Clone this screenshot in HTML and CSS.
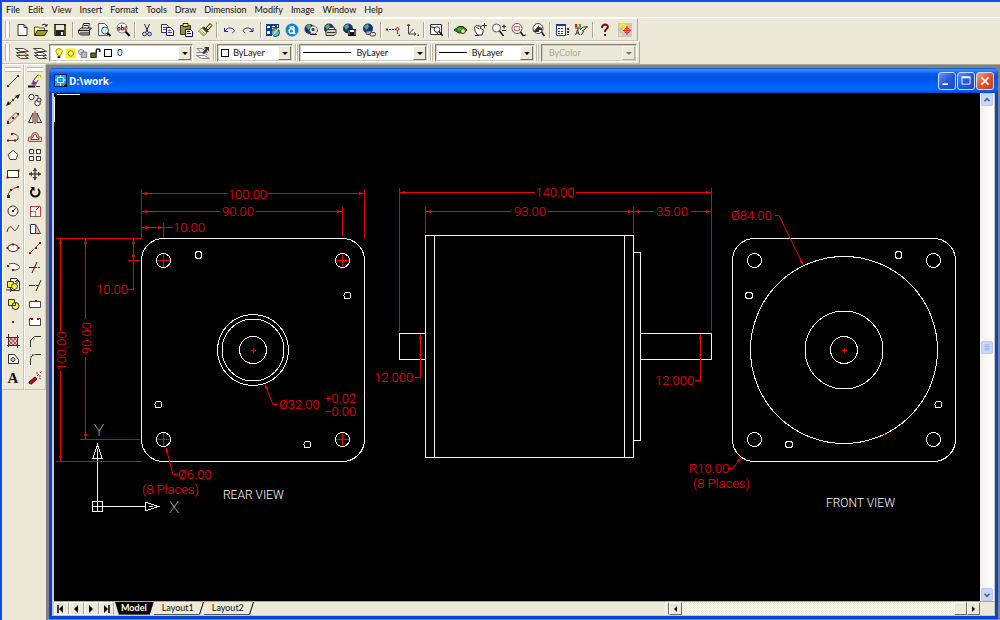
FILE: index.html
```html
<!DOCTYPE html>
<html lang="en">
<head>
<meta charset="utf-8">
<title>D:\work</title>
<link rel="stylesheet" href="styles.css">
</head>
<body>
<div class="app">
<nav class="menubar" aria-label="Main menu">
<button>File</button><button>Edit</button><button>View</button><button>Insert</button><button>Format</button><button>Tools</button><button>Draw</button><button>Dimension</button><button>Modify</button><button>Image</button><button>Window</button><button>Help</button>
</nav>

<div class="toolbar standard" role="toolbar" aria-label="Standard">
<span class="grip"></span>
<div class="tools">
<button aria-label="New"><svg viewBox="0 0 16 16"><path d="M4 2.500h6l3 3v8H4z" fill="#fff" stroke="#333"/><path d="M10 2.500v3h3" fill="none" stroke="#333"/></svg></button>
<button aria-label="Open"><svg viewBox="0 0 16 16"><path d="M1.500 13V5h4l1 1h5v3" fill="#ffff9c" stroke="#55520c"/><path d="M1.500 13.500l3-5h10l-3 5z" fill="#a09c1c" stroke="#222"/><path d="M9 3q3-2 5 1m0-2v2h-2" fill="none" stroke="#111"/></svg></button>
<button aria-label="Save"><svg viewBox="0 0 16 16"><path d="M2 2h12v12H3l-1-1z" fill="#222"/><path d="M4 3h8v5H4z" fill="#ece9d8"/><path d="M3 3v10M13 4v9" stroke="#808000"/><path d="M9 10h2v3H9z" fill="#fff"/></svg></button>
<i class="sep"></i>
<button aria-label="Print"><svg viewBox="0 0 16 16"><path d="M5.500 6l1-4.500h6l-1 4.500" fill="#fff" stroke="#222"/><path d="M7 3.500h4" stroke="#111"/><path d="M1.500 8l3-2h10l-2 2v5h-9l-2-2z" fill="#ccc" stroke="#222"/><path d="M2 8.500h10l2-2M3 11h9" fill="none" stroke="#222"/></svg></button>
<button aria-label="Print Preview"><svg viewBox="0 0 16 16"><path d="M2.500 1.500h6l3 3v9h-9z" fill="#fff" stroke="#555"/><circle cx="9" cy="8.500" r="3.500" fill="#bff2f5" stroke="#555"/><path d="M11.500 11l3 3" stroke="#111" stroke-width="2"/></svg></button>
<button aria-label="Find and Replace"><svg viewBox="0 0 16 16"><circle cx="7" cy="6" r="5" fill="#fff" stroke="#777"/><path d="M10.500 9.500l4 4.500" stroke="#111" stroke-width="2"/><path d="M3 5.500h2V8H3zM6.500 3v5h2V5.500h-2M12 5h-2v3h2" fill="none" stroke="#a00020"/></svg></button>
<i class="sep"></i>
<button aria-label="Cut"><svg viewBox="0 0 16 16"><path d="M5.500 2l3.500 8M10.500 2L7 10" stroke="#222"/><circle cx="5.500" cy="12" r="1.800" fill="none" stroke="#0a1d8c"/><circle cx="10.500" cy="12" r="1.800" fill="none" stroke="#0a1d8c"/></svg></button>
<button aria-label="Copy"><svg viewBox="0 0 16 16"><path d="M2.500 2.500h5l2 2v6h-7z" fill="#fff" stroke="#333"/><path d="M4 5.500h4M4 7.500h3" stroke="#555"/><path d="M7.500 5.500h4l3 3v5h-7z" fill="#fff" stroke="#00008b"/><path d="M9 8.500h3M9 10.500h4" stroke="#4040a0"/></svg></button>
<button aria-label="Paste"><svg viewBox="0 0 16 16"><path d="M2.500 3.500h10v9h-10z" fill="#9a8f38" stroke="#333"/><path d="M5 1.500h5v3H5z" fill="#ffef70" stroke="#222"/><path d="M7.500 7.500h5l2 2v5h-7z" fill="#fff" stroke="#00008b"/><path d="M9 9.500h3M9 11.500h4" stroke="#00008b"/></svg></button>
<button aria-label="Match Properties"><svg viewBox="0 0 16 16"><path d="M9 6l4-4.500 2 2L11 8z" fill="#ffdf60" stroke="#111"/><path d="M7 4.500l5 5-2 1-5-5z" fill="#333"/><path d="M5 6l5 5-3.500 3L1.500 9z" fill="#fff8a0" stroke="#777"/><path d="M4 8l4 4M3 9l4 4" stroke="#aaa"/></svg></button>
<i class="sep"></i>
<button aria-label="Undo"><svg viewBox="0 0 16 16"><path d="M3.500 6v3.500H7M4 9c2-3 5-4 8-2s0 3.500-1 4" fill="none" stroke="#1a2a9c"/></svg></button>
<button aria-label="Redo"><svg viewBox="0 0 16 16"><path d="M13 6v3.500H9.500M12.500 9c-2-3-5-4-8-2s0 3.500 1 4" fill="none" stroke="#1a2a9c"/></svg></button>
<i class="sep"></i>
<button aria-label="Today"><svg viewBox="0 0 16 16"><path d="M1 2h13v4H7v8H1z" fill="#063a9c"/><path d="M2 4h3v2H2zM7 4h3v1H7zM12 3h1v2h-1zM2 9h3v3H2z" fill="#fff"/><circle cx="10.500" cy="10.500" r="4" fill="#59b9e4" stroke="#145"/><path d="M8 9l3 3 2-5z" fill="#79c84a"/><path d="M7 14l6-7" stroke="#ff9"/></svg></button>
<button aria-label="Autodesk Point A"><svg viewBox="0 0 16 16"><circle cx="8" cy="8" r="6.500" fill="#0b82df"/><circle cx="7.500" cy="9" r="2.300" fill="none" stroke="#fff" stroke-width="1.600"/><path d="M5.500 5.500q4.500-1.800 4.500 1V11.500h1.500" fill="none" stroke="#fff" stroke-width="1.500"/></svg></button>
<button aria-label="Meet Now"><svg viewBox="0 0 16 16"><circle cx="6.500" cy="7" r="5" fill="#112c96"/><path d="M3 4l4-2 1 3-3 3z" fill="#57b745"/><circle cx="10.500" cy="8" r="4" fill="#ddd" stroke="#444" stroke-dasharray="2 1"/><path d="M7 12.500h7" stroke="#111"/><circle cx="10" cy="7.500" r="1.500" fill="#333"/></svg></button>
<button aria-label="Publish to Web"><svg viewBox="0 0 16 16"><circle cx="7" cy="6.500" r="5" fill="#112c96"/><path d="M3 4l4-2 1 3-3 3z" fill="#57b745"/><path d="M6 7.500l1.500-2h5L12 7.500" fill="#fff" stroke="#444"/><path d="M4 8.500l2-1h8v4l-2 2H4z" fill="#ccc" stroke="#333"/><path d="M5 10.500h8" stroke="#333"/></svg></button>
<button aria-label="eTransmit"><svg viewBox="0 0 16 16"><circle cx="7" cy="6.500" r="5" fill="#112c96"/><path d="M3 4l4-2 1 3-3 3z" fill="#57b745"/><path d="M7 7h8v7H7z" fill="#111"/><path d="M9 8h4v2H9z" fill="#fff"/><path d="M8 8v5M14 8v5" stroke="#a7a033"/></svg></button>
<button aria-label="Insert Hyperlink"><svg viewBox="0 0 16 16"><circle cx="7" cy="6.500" r="5" fill="#112c96"/><path d="M3 4l4-2 1 3-3 3z" fill="#57b745"/><rect x="5" y="9" width="6" height="3.500" rx="1.500" fill="#aaa" stroke="#444"/><rect x="9" y="10.500" width="5.500" height="3.500" rx="1.500" fill="#ddd" stroke="#444"/></svg></button>
<i class="sep"></i>
<button aria-label="Temporary Track Point"><svg viewBox="0 0 16 16"><path d="M1 7.500h10" stroke="#111" stroke-dasharray="2 1"/><path d="M3 5.500l-2 2 2 2" fill="none" stroke="#555"/><circle cx="12.500" cy="7" r="1.500" fill="none" stroke="#b22"/><path d="M12.500 9v3" stroke="#b22"/><path d="M15 12v2h-2z"/></svg></button>
<button aria-label="UCS"><svg viewBox="0 0 16 16"><path d="M4.500 2v10H12M4.500 12l5-5M3 4l1.500-2L6 4M10 10.500l2 1.500-2 1.500" fill="none" stroke="#444"/><path d="M15 12v2h-2z"/></svg></button>
<i class="sep"></i>
<button aria-label="Named Views"><svg viewBox="0 0 16 16"><path d="M2.500 2.500h11v10h-11zM2.500 5h3M4.500 5.500h5v7h-5" fill="#fff" stroke="#333"/><circle cx="9" cy="7.500" r="2.800" fill="#fff" stroke="#333"/><path d="M11 9.500l3 3.500" stroke="#111" stroke-width="1.500"/><path d="M15 12v2h-2z"/></svg></button>
<i class="sep"></i>
<button aria-label="Aerial View"><svg viewBox="0 0 16 16"><path d="M1 8l5-3.500h4L14 8l-4 3H6z" fill="#18952e" stroke="#043e12"/><circle cx="10" cy="9" r="2.500" fill="#ffe044" stroke="#444"/><path d="M5 7h3" stroke="#8ddb73"/></svg></button>
<button aria-label="Pan Realtime"><svg viewBox="0 0 16 16"><path d="M2.500 5l2-1.500 5 1L8 6l3.500 2-1.500 5H5.500L3 9z" fill="#fff" stroke="#333"/><path d="M4.500 5.500l3 1.500M3 13.500h4M10 3.500h5M12.500 1v5" stroke="#333"/></svg></button>
<button aria-label="Zoom Realtime"><svg viewBox="0 0 16 16"><circle cx="5.500" cy="6" r="4" fill="#fff" stroke="#555"/><path d="M8.500 9l4 5" stroke="#111" stroke-width="1.500"/><path d="M11 4.500h4M13 2.500v4M11 8.500h4" stroke="#222"/></svg></button>
<button aria-label="Zoom Window"><svg viewBox="0 0 16 16"><circle cx="7" cy="6.500" r="5" fill="#fff" stroke="#555"/><path d="M4.500 4.500h5v4h-5z" fill="none" stroke="#c66"/><path d="M10.500 10l3 4" stroke="#111" stroke-width="1.500"/><path d="M15.500 12v2h-2z"/></svg></button>
<button aria-label="Zoom Previous"><svg viewBox="0 0 16 16"><circle cx="8" cy="6.500" r="5" fill="#fff" stroke="#444"/><path d="M3 10l6-7v2q4 0 3 4-2-2-3-1v2z" fill="#333"/><path d="M11.500 10l3 4" stroke="#111" stroke-width="1.500"/></svg></button>
<i class="sep"></i>
<button aria-label="AutoCAD DesignCenter"><svg viewBox="0 0 16 16"><path d="M2.500 2.500h9v11h-9z" fill="#fff" stroke="#223a85"/><path d="M2 3h10" stroke="#123b9c" stroke-width="2"/><path d="M4 6.500h6M4 9.500h6M4 11.500h6" stroke="#223a85" stroke-dasharray="2 1"/><path d="M14 6v7" stroke="#223a85" stroke-width="2" stroke-dasharray="2 1"/></svg></button>
<button aria-label="Properties"><svg viewBox="0 0 16 16"><path d="M2 2h2v3H2z" fill="#d11"/><path d="M4 2h2v3H4z" fill="#f5e11d"/><path d="M6 2h2v3H6z" fill="#22b14c"/><path d="M2 6h6M5 6v2M2.500 13l2-5 2 5M3 11h3M8 13l3-4M7 8l3-3h5M9 9q4-1 5-5" fill="none" stroke="#333"/></svg></button>
<i class="sep"></i>
<button aria-label="Help"><svg viewBox="0 0 16 16"><path d="M5 6q0-3.500 3.500-3.500c3 .5 3 3 1 4.500Q8 8 8 10" fill="none" stroke="#8f0012" stroke-width="2"/><path d="M7 12h2v2H7z" fill="#8f0012"/></svg></button>
<button aria-label="Active Assistance"><svg viewBox="0 0 16 16"><path d="M1 1h14v14H1z" fill="#c9c6c0"/><path d="M3 5q1-3 4-2t0 5v2" fill="none" stroke="#ffef00" stroke-width="2.500"/><path d="M2 11h3v3H2z" fill="#ffef00"/><circle cx="10" cy="8.500" r="2.500" fill="none" stroke="#e22"/><path d="M10 4v9M6 8.500h8" stroke="#e22"/></svg></button>
</div>
</div>

<div class="toolbar properties" role="toolbar" aria-label="Object Properties">
<span class="grip"></span>
<div class="props">
<button aria-label="Make Object's Layer Current"><svg viewBox="0 0 16 16"><path d="M2.500 10.500h8l4 3h-8z" fill="#fff" stroke="#444"/><path d="M2.500 7.500h8l4 3h-8z" fill="#ffe44a" stroke="#444"/><path d="M1.500 3.500h8l5 3h-8z" fill="#fff" stroke="#444"/></svg></button>
<button aria-label="Layers"><svg viewBox="0 0 16 16"><path d="M2.500 10.500h8l4 3h-8zM2.500 7.500h8l4 3h-8zM1.500 3.500h8l5 3h-8z" fill="#fff" stroke="#444"/></svg></button>
<label class="combo layer"><span class="swatches"><svg class="state" viewBox="0 0 56 14"><path d="M4.500 8Q2 5 4 3t5 0 0 5l-1 2H5.500z" fill="#ffff3c" stroke="#998d00"/><path d="M5 11.500h3" stroke="#222" stroke-width="2"/><path d="M14 2h11v11H14z" fill="#fff600"/><circle cx="19.500" cy="7.500" r="3" fill="#ffffb0" stroke="#7d7400"/><circle cx="31" cy="6" r="3" fill="#ddd" stroke="#888"/><path d="M31 6h6v6h-6z" fill="#bbb" stroke="#777"/><path d="M41.500 7h6v5h-6z" fill="#6b6718" stroke="#111"/><path d="M47.500 7V4q0-1.500 2-1.500t2 1.500v2" fill="none" stroke="#111" stroke-width="1.500"/></svg><i class="box"></i></span>
<select aria-label="Layer"><option>0</option></select><i class="arrow"></i></label>
<button aria-label="Layer Previous"><svg viewBox="0 0 16 16"><path d="M1.500 10.500h8l5 3h-8zM1.500 7.500h7l4 2.500M2 3.500h5l6 4H6z" fill="#eee" stroke="#888"/><path d="M7 8l4-4.500h-1.500V2H14v4.500l-1.500-1.500L9 9z" fill="#333"/></svg></button>
<span class="grip"></span>
<label class="combo color"><span class="swatches"><i class="box"></i></span><select aria-label="Color"><option>ByLayer</option></select><i class="arrow"></i></label>
<span class="grip"></span>
<label class="combo linetype"><span class="swatches"><i class="rule"></i></span><select aria-label="Linetype"><option>ByLayer</option></select><i class="arrow"></i></label>
<span class="grip"></span>
<label class="combo weight"><span class="swatches"><i class="rule"></i></span><select aria-label="Lineweight"><option>ByLayer</option></select><i class="arrow"></i></label>
<span class="grip"></span>
<label class="combo plot"><select aria-label="Plot style" disabled><option>ByColor</option></select><i class="arrow"></i></label>
</div>
</div>

<div class="workspace">
<div class="dock" role="toolbar" aria-label="Draw">
<span class="hgrip"></span>
<div class="stack">
<button aria-label="Line"><svg viewBox="0 0 16 16"><path d="M3 13L13 3" stroke="#444"/><path d="M2 12h2v2H2zM12 2h2v2h-2z" fill="#a00"/></svg></button>
<button aria-label="Construction Line"><svg viewBox="0 0 16 16"><path d="M3 13L13 3" stroke="#444"/><path d="M1 14l2-5 3 3zM15 2l-2 5-3-3z" fill="#222"/><path d="M7 7h2v2H7z" fill="#a00"/></svg></button>
<button aria-label="Multiline"><svg viewBox="0 0 16 16"><path d="M2.500 11l8.500-8.500 2.500 2.500-8.500 8.500z" fill="#e4e1d4" stroke="#666"/><path d="M2 11h2v3H2zM12 3h2v2h-2zM7 7h2v2H7z" fill="#a00"/></svg></button>
<button aria-label="Polyline"><svg viewBox="0 0 16 16"><path d="M3 11.500h8q3-1 2-4t-6-3" fill="none" stroke="#444"/><path d="M2 10.500h2v2H2zM9 10.500h2v2H9zM6 4h2v2H6z" fill="#a00"/></svg></button>
<button aria-label="Polygon"><svg viewBox="0 0 16 16"><path d="M8 3.500l5 4-2 5H5l-2-5z" fill="#fff" stroke="#444"/></svg></button>
<button aria-label="Rectangle"><svg viewBox="0 0 16 16"><path d="M2.500 4.500h11v7h-11z" fill="#fff" stroke="#333"/><path d="M1.500 10.500h2v2h-2zM12.500 3.500h2v2h-2z" fill="#a00"/></svg></button>
<button aria-label="Arc"><svg viewBox="0 0 16 16"><path d="M3 13q0-8 10-10" fill="none" stroke="#444"/><path d="M2 11h3v3H2zM5 5h2v2H5zM12 2h2v2h-2z" fill="#a00"/></svg></button>
<button aria-label="Circle"><svg viewBox="0 0 16 16"><circle cx="8" cy="8" r="5" fill="#fff" stroke="#333"/><path d="M8 8l3-3" stroke="#a00"/><path d="M7 7h2v2H7z" fill="#a00"/></svg></button>
<button aria-label="Spline"><svg viewBox="0 0 16 16"><path d="M2 11c2-8 5-5 6-3s3 3 6-4" fill="none" stroke="#333"/></svg></button>
<button aria-label="Ellipse"><svg viewBox="0 0 16 16"><ellipse cx="8" cy="8" rx="5.500" ry="3.500" fill="#fff" stroke="#333"/><path d="M1.500 7h2v2h-2zM12.500 7h2v2h-2zM7 3.500h2v2H7z" fill="#a00"/></svg></button>
<button aria-label="Ellipse Arc"><svg viewBox="0 0 16 16"><path d="M4 5q5-2 9 1t-2 5H8" fill="#fff" stroke="#444"/><path d="M2 6h2v2H2zM7 10h2v2H7z" fill="#a00"/></svg></button>
<button aria-label="Insert Block"><svg viewBox="0 0 16 16"><path d="M5.500 1.500h6l3 3v9h-9z" fill="#fff" stroke="#333"/><path d="M2.500 4.500h6v6h-6z" fill="#ffef40" stroke="#333"/><circle cx="9.500" cy="9.500" r="3" fill="#ffef40" stroke="#333"/><path d="M1 13h6l-2-2m2 2l-2 2M12 7V3m-2 2l2-2 2 2" fill="none" stroke="#333"/></svg></button>
<button aria-label="Make Block"><svg viewBox="0 0 16 16"><path d="M3.500 3.500h6v6h-6z" fill="#ffef40" stroke="#333"/><circle cx="10.500" cy="10" r="3.500" fill="#ffef40" stroke="#333"/><path d="M3.500 9.500h7v-3" fill="none" stroke="#333"/></svg></button>
<button aria-label="Point"><svg viewBox="0 0 16 16"><path d="M7 7h2v2H7z" fill="#a00"/></svg></button>
<button aria-label="Hatch"><svg viewBox="0 0 16 16"><path d="M4 4h8v8H4z" fill="#e4b8b0"/><path d="M4 8l4-4M4 12l8-8M8 12l4-4M4 8l4 4M4 4l8 8M8 4l4 4" stroke="#b55"/><path d="M3.500 1v13M12.500 2v13M1 4.500h13M2 12.500h13" stroke="#333"/></svg></button>
<button aria-label="Region"><svg viewBox="0 0 16 16"><path d="M3.500 3.500h6l4 5v4h-10z" fill="#fff" stroke="#333"/><circle cx="8" cy="8.500" r="2" fill="#ccc" stroke="#333"/></svg></button>
<button class="mtext" aria-label="Multiline Text">A</button>
</div>
</div>
<div class="dock" role="toolbar" aria-label="Modify">
<span class="hgrip"></span>
<div class="stack">
<button aria-label="Erase"><svg viewBox="0 0 16 16"><path d="M6 8l5-6 3 1-5 7z" fill="#fff" stroke="#333"/><path d="M10 3l3-1 1 2-3 4z" fill="#ffee50"/><path d="M6 8l4 2.500-2 2-4-1.500z" fill="#903090"/><path d="M1 13.500h7" stroke="#111" stroke-width="2"/><path d="M9 13.500h4" stroke="#333"/></svg></button>
<button aria-label="Copy Object"><svg viewBox="0 0 16 16"><circle cx="4.500" cy="5" r="2.700" fill="#fff" stroke="#333"/><circle cx="10.500" cy="11" r="2.800" fill="#fff" stroke="#333"/><circle cx="12" cy="8" r="2" fill="#ddd" stroke="#333"/><path d="M8 3.500h3v2" fill="none" stroke="#333"/></svg></button>
<button aria-label="Mirror"><svg viewBox="0 0 16 16"><path d="M6 3v9.500H1.500z" fill="#fff" stroke="#333"/><path d="M10 3v9.500h4.500z" fill="#ddd" stroke="#333"/><path d="M8 1v13" stroke="#a00"/></svg></button>
<button aria-label="Offset"><svg viewBox="0 0 16 16"><path d="M1.500 12.500v-4l3-1q0-4 3.500-4t3.500 4l3 1v4z" fill="#efc7c1" stroke="#b44"/><path d="M4 10.500h8q1-2-2-2 0-3-2-3t-2 3q-3 0-2 2z" fill="#fff" stroke="#444"/></svg></button>
<button aria-label="Array"><svg viewBox="0 0 16 16"><path d="M2.500 2.500h4v4h-4zM9.500 2.500h4v4h-4zM2.500 9.500h4v4h-4zM9.500 9.500h4v4h-4z" fill="#fff" stroke="#333"/></svg></button>
<button aria-label="Move"><svg viewBox="0 0 16 16"><path d="M8 2v12M2 8h12" stroke="#444" stroke-width="1.500"/><path d="M8 2l2.500 3h-5zM8 14l2.500-3h-5zM2 8l3-2.500v5zM14 8l-3-2.500v5z" fill="#444"/></svg></button>
<button aria-label="Rotate"><svg viewBox="0 0 16 16"><path d="M11 5a4.300 4.300 0 1 1-5.500 0" fill="none" stroke="#111" stroke-width="2"/><path d="M3.500 3h4v4.500z"/></svg></button>
<button aria-label="Scale"><svg viewBox="0 0 16 16"><path d="M3.500 3.500h10v10h-10z" fill="#f6efe9" stroke="#b44"/><path d="M3.500 8.500h5v5h-5z" fill="#fff" stroke="#222" stroke-dasharray="1 1"/><path d="M9 7l3-3" stroke="#a22"/></svg></button>
<button aria-label="Stretch"><svg viewBox="0 0 16 16"><path d="M3.500 3.500h5l5 9h-10z" fill="#fff" stroke="#333"/><path d="M8.500 3.500v9" stroke="#a22"/><path d="M9 6l3 6H9z" fill="#e4b0b0"/></svg></button>
<button aria-label="Lengthen"><svg viewBox="0 0 16 16"><path d="M3 13L13 3" stroke="#555" stroke-dasharray="5 1 1 1"/><path d="M2 12h2v2H2zM8 7h2v2H8zM12 2h2v2h-2z" fill="#a00"/></svg></button>
<button aria-label="Trim"><svg viewBox="0 0 16 16"><path d="M2 8.500h6M5 14l5-11" stroke="#222"/><path d="M8 8.500h6" stroke="#a00" stroke-dasharray="2 1"/></svg></button>
<button aria-label="Extend"><svg viewBox="0 0 16 16"><path d="M2 8.500h4M9 14l5-11" stroke="#222"/><path d="M6 8.500h5" stroke="#a00" stroke-dasharray="2 1"/></svg></button>
<button aria-label="Break at Point"><svg viewBox="0 0 16 16"><path d="M2.500 5.500h11v6h-11z" fill="#fff" stroke="#444"/><path d="M8 4h2v2H8z" fill="#a00"/></svg></button>
<button aria-label="Break"><svg viewBox="0 0 16 16"><path d="M5 4.500H2.500v7h11v-7H11" fill="#fff" stroke="#444"/><path d="M4 4h2v2H4zM10 4h2v2h-2z" fill="#a00"/></svg></button>
<button aria-label="Chamfer"><svg viewBox="0 0 16 16"><path d="M3.500 14V7.500l4-4H14" fill="none" stroke="#333"/><path d="M4 7l3 0 1-3" fill="none" stroke="#888" stroke-dasharray="1 1"/></svg></button>
<button aria-label="Fillet"><svg viewBox="0 0 16 16"><path d="M3.500 14V9q0-5 5-5.500H14" fill="none" stroke="#333"/><path d="M3.500 8V3.500H8" fill="none" stroke="#888" stroke-dasharray="1 1"/></svg></button>
<button aria-label="Explode"><svg viewBox="0 0 16 16"><path d="M2 12l6-5 2 2-5.500 5q-3 0-2.500-2z" fill="#c3001c" stroke="#700"/><path d="M10 6l2-2M10 4V2M12 6h2M13 3l1.500-1.500M12 8l2 1" stroke="#a44"/></svg></button>
</div>
</div>

<main class="mdi">
<section class="window" aria-label="Drawing window">
<header class="titlebar">
<svg class="docicon" viewBox="0 0 14 14"><path d="M.5.5h12v9l-3 3h-9z" fill="#219cf0" stroke="#04205a"/><path d="M3.500 3.500h6v5h-6zM6.500 1v3M6.500 8v4M1 6h3M9 6h3" fill="none" stroke="#fff"/><path d="M13 9v4H9z" fill="#111"/></svg>
<h1>D:\work<span>-</span></h1>
<div class="controls">
<button aria-label="Minimize"><svg viewBox="0 0 18 18"><path d="M4 12.500h6" stroke="#fff" stroke-width="2"/></svg></button>
<button aria-label="Maximize"><svg viewBox="0 0 18 18"><path d="M4.500 4.500h9v8h-9z" fill="none" stroke="#fff"/><path d="M4 5h10" stroke="#fff" stroke-width="2"/></svg></button>
<button class="close" aria-label="Close"><svg viewBox="0 0 18 18"><path d="M5 5l8 8M13 5l-8 8" stroke="#fff" stroke-width="2"/></svg></button>
</div>
</header>
<div class="client">
<svg class="drawing" viewBox="54 93 926 508" role="img" aria-label="Motor drawing: rear, side and front views">
<defs>
<marker id="tip" viewBox="0 0 5 4" markerWidth="5" markerHeight="4" refX="5" refY="2" orient="auto-start-reverse"><path d="M0 .5L5 2 0 3.500z" fill="#f00"/></marker>
</defs>
<g class="part">
<path d="M57 94.500h23M54.500 97v25"/>
<rect x="141.500" y="238.500" width="223" height="223" rx="22"/>
<circle cx="163.500" cy="260.500" r="7"/><circle cx="342.500" cy="260.500" r="7"/><circle cx="163.500" cy="439.500" r="7"/><circle cx="342.500" cy="439.500" r="7"/>
<circle cx="198.500" cy="255" r="3.500"/><circle cx="347.500" cy="295.500" r="3.500"/><circle cx="158.500" cy="404.500" r="3.500"/><circle cx="307.500" cy="444.500" r="3.500"/>
<circle cx="253" cy="350" r="35.500"/><circle cx="253" cy="350" r="31"/><circle cx="253" cy="350" r="13.500"/>
<path d="M425.500 235.500h208v222h-208zM434.500 235v223M624.500 235v223M633.500 252.500h7v188h-7M425.500 333.500h-26v26h26M640.500 333.500h71v26h-71"/>
<rect x="732.500" y="238.500" width="223" height="223" rx="22"/>
<circle cx="754.500" cy="260.500" r="7"/><circle cx="933.500" cy="260.500" r="7"/><circle cx="754.500" cy="439.500" r="7"/><circle cx="933.500" cy="439.500" r="7"/>
<circle cx="898.500" cy="255" r="3.500"/><circle cx="749" cy="295.500" r="3.500"/><circle cx="938.500" cy="404.500" r="3.500"/><circle cx="789" cy="444.500" r="3.500"/>
<circle cx="844" cy="350" r="93.500"/><circle cx="844" cy="350" r="39"/><circle cx="844" cy="350" r="13.500"/>
<path d="M92.500 501.500h10v10h-10zM97.500 511V458M92 506.500h53M97.500 445l-4.500 13h9zM158 506.500l-13-4.500v9zM97.500 449v9M149 506.500h4"/>
</g>
<g class="ext">
<path d="M141.500 189v49M364.500 189v49M342.500 207v29M163.500 223v15M56 238.500h85M80 439.500h60M56 461.500h86M128 260.500h12M399.500 188v143M711.500 188v143M425.500 207v26M633.500 207v26"/>
<path d="M157 260.500h13M163.500 254v13M336 260.500h13M342.500 254v13M157 439.500h13M163.500 433v13M336 439.500h13M342.500 433v13M251 350.500h5M253.500 348v5M842 350.500h5M844.500 348v5M754 439.500h2M884 434.500h2"/>
</g>
<g class="dim">
<path d="M228 193.500h-86"/><path d="M268 193.500h96"/><path d="M220 211.500h-78"/><path d="M256 211.500h86"/><path d="M152 227.500h-10"/><path d="M152 227.500h11"/>
<path d="M60.500 331v-92"/><path d="M60.500 371v90"/><path d="M85.500 319v-80"/><path d="M85.500 357v82"/><path d="M133.500 250v-11"/><path d="M133.500 250v10"/>
<path d="M535 192.500H400"/><path d="M576 192.500h135"/><path d="M511 211.500h-85"/><path d="M548 211.500h85"/><path d="M654 211.500h-20"/><path d="M691 211.500h20"/>
<path d="M420.500 346v-12"/><path d="M420.500 346v13"/><path d="M700.500 346v-12"/><path d="M700.500 346v13"/>
<path d="M278 404.500h-5l-8-20"/><path d="M178 474.500h-5l-7-27"/><path d="M775 215.500h4l24 49"/><path d="M728 468.500h5l8-11"/>
</g>
<path class="lead" d="M163 227.500h10M133.500 260v29.500H127M420.500 359v18.500H415M700.500 359v21.500H695"/>
<g class="value">
<text x="247.500" y="199" text-anchor="middle">100.00</text>
<text x="238" y="216" text-anchor="middle">90.00</text>
<text x="173" y="232">10.00</text>
<text x="96" y="294">10.00</text>
<text transform="translate(66 351) rotate(-90)" text-anchor="middle">100.00</text>
<text transform="translate(91 338) rotate(-90)" text-anchor="middle">90.00</text>
<text x="279" y="409">Ø32.00</text>
<text x="324" y="403">+0.02</text>
<text x="324" y="416">−0.00</text>
<text x="178" y="479">Ø6.00</text>
<text x="142" y="494">(8 Places)</text>
<text x="555" y="197" text-anchor="middle">140.00</text>
<text x="530" y="216" text-anchor="middle">93.00</text>
<text x="672" y="216" text-anchor="middle">35.00</text>
<text x="374" y="382">12.000</text>
<text x="655" y="385">12.000</text>
<text x="731" y="220">Ø84.00</text>
<text x="689" y="473">R10.00</text>
<text x="693" y="488">(8 Places)</text>
</g>
<g class="caption">
<text x="223" y="499">REAR VIEW</text>
<text x="826" y="507">FRONT VIEW</text>
<text class="axis" x="99" y="436" text-anchor="middle">Y</text>
<text class="axis" x="174" y="513" text-anchor="middle">X</text>
</g>
</svg>
<div class="vscroll">
<button aria-label="Scroll up"><svg viewBox="0 0 12 12"><path d="M3 7.500l3-3 3 3" fill="none" stroke="#4d6185" stroke-width="2"/></svg></button>
<span class="gutter"></span>
<button class="thumb" aria-label="Scroll position"><svg viewBox="0 0 12 12"><path d="M3 3.500h6M3 5.500h6M3 7.500h6M3 9.500h6" stroke="#8fb0f0"/></svg></button>
<span class="gutter"></span>
<button aria-label="Scroll down"><svg viewBox="0 0 12 12"><path d="M3 4.500l3 3 3-3" fill="none" stroke="#4d6185" stroke-width="2"/></svg></button>
</div>
<footer class="bottom">
<div class="pager">
<button aria-label="First layout"><svg viewBox="0 0 12 12"><path d="M3 2v8" stroke="#000" stroke-width="1.500"/><path d="M8 2v8L4 6z"/></svg></button>
<button aria-label="Previous layout"><svg viewBox="0 0 12 12"><path d="M8 2v8L4 6z"/></svg></button>
<button aria-label="Next layout"><svg viewBox="0 0 12 12"><path d="M4 2v8l4-4z"/></svg></button>
<button aria-label="Last layout"><svg viewBox="0 0 12 12"><path d="M9 2v8" stroke="#000" stroke-width="1.500"/><path d="M4 2v8l4-4z"/></svg></button>
</div>
<div class="tabs">
<button class="active">Model</button>
<button>Layout1</button><svg class="slash" viewBox="0 0 5 13"><path d="M4.500 0L.5 12.500"/></svg>
<button>Layout2</button><svg class="slash" viewBox="0 0 5 13"><path d="M4.500 0L.5 12.500"/></svg>
</div>
<div class="hscroll">
<span class="split"></span>
<button aria-label="Scroll left"><svg viewBox="0 0 12 12"><path d="M7 3v6L4 6z"/></svg></button>
<span class="gutter"></span>
<button class="thumb" aria-label="Horizontal position"></button>
<button aria-label="Scroll right"><svg viewBox="0 0 12 12"><path d="M4 3v6l3-3z"/></svg></button>
</div>
<span class="corner"></span>
</footer>
</div>
</section>
</main>
</div>
</div>
</body>
</html>
```
FILE: styles.css
```css
* { box-sizing: border-box; }
body { margin: 0; font: 9px/12px Lato, "Liberation Sans", sans-serif; color: #111; }
button { padding: 0; border: 0; background: none; font: inherit; color: inherit; }
svg { display: block; }

.app {
  display: flex; flex-direction: column; height: 100vh; overflow: hidden;
  background: #ece9d8; border-top: 2px solid #0b4fe6; border-left: 2px solid #0b4fe6;
}
.menubar { display: flex; gap: 8px; height: 16px; flex: none; padding: 1px 4px; border-bottom: 1px solid #fff; }

.toolbar {
  display: flex; align-items: center; height: 23px; flex: none; align-self: flex-start;
  padding: 0 4px 0 3px; border-top: 1px solid #fff; border-right: 1px solid #aca899; border-bottom: 1px solid #c8c4b2;
}
.standard { width: 636px; }
.properties { width: 638px; padding-right: 2px; }
.grip { width: 5px; height: 17px; flex: none; border: solid #bdb9a8; border-width: 0 1px; background: #fff; background-clip: padding-box; }
.tools, .props { flex: 1; display: flex; align-items: center; justify-content: space-between; }
.tools { margin-left: 4px; }
.props { margin-left: 4px; }
.tools button, .props > button { width: 16px; height: 16px; }
.sep { width: 2px; height: 16px; border-left: 1px solid #aca899; border-right: 1px solid #fff; }
.props .grip { width: 3px; }

.combo { position: relative; display: block; height: 18px; }
.combo select {
  appearance: none; width: 100%; height: 18px; padding: 0 16px 0 8px; border: 1px solid #7f7d70;
  border-right-color: #fff; border-bottom-color: #fff; border-radius: 0; background: #fff; font: inherit; color: #111; outline: 1px solid #d4d0bf; outline-offset: -2px;
}
.combo select:disabled { background: #ece9d8; color: #aca899; opacity: 1; }
.swatches { position: absolute; left: 4px; top: 0; height: 18px; display: flex; align-items: center; z-index: 1; pointer-events: none; }
.state { width: 51px; height: 14px; }
.box { width: 8px; height: 8px; border: 1px solid #000; }
.rule { height: 1px; background: #000; }
.arrow {
  position: absolute; right: 2px; top: 2px; width: 13px; height: 14px; background: #ece9d8; pointer-events: none;
  border: 1px solid #fff; border-right-color: #716f64; border-bottom-color: #716f64;
}
.arrow::after { content: ""; position: absolute; left: 3px; top: 5px; border: 3px solid transparent; border-top-color: #000; border-bottom: 0; }
.layer { width: 144px; }
.layer select { padding-left: 67px; }
.color { width: 76px; }
.color select { padding-left: 15px; }
.linetype { width: 129px; }
.linetype select { padding-left: 56px; }
.linetype .rule { width: 48px; }
.weight { width: 100px; }
.weight select { padding-left: 36px; }
.weight .rule { width: 28px; }
.plot { width: 96px; }
.plot select { padding-left: 7px; }
.plot .arrow { opacity: .5; }

.workspace { flex: 1; display: flex; min-height: 0; }
.dock { width: 22px; flex: none; align-self: flex-start; padding: 2px; border: 1px solid #fff; border-right-color: #c8c4b2; border-bottom-color: #c8c4b2; }
.hgrip { display: block; height: 5px; border: solid #bdb9a8; border-width: 1px 0; background: #fff; background-clip: padding-box; }
.stack { display: grid; grid-auto-rows: 1fr; height: 315px; }
.stack button { display: grid; place-items: center; min-height: 0; overflow: hidden; }
.stack svg { width: 16px; height: 16px; }
.mtext { font: bold 15px/16px "Liberation Serif", serif; }

.mdi { flex: 1; min-width: 0; padding: 3px 2px 1px 3px; background: #808080; border-top: 1px solid #aca899; }
.window {
  display: flex; flex-direction: column; height: 100%; overflow: hidden; background: #0a41dd;
  border-radius: 5px 5px 0 0;
}
.titlebar {
  display: flex; align-items: center; height: 25px; flex: none; padding: 0 4px 0 5px; color: #fff;
  background: linear-gradient(#0a58d8 0, #3b93ff 2px, #0a5fe8 5px, #0053e0 10px, #0060f8 17px, #0068ff 22px, #0042c8 25px);
}
.docicon { width: 14px; height: 14px; }
.titlebar h1 { flex: 1; margin: 0 0 0 1px; font: bold 10px/14px "Open Sans", "Noto Sans", sans-serif; }
.titlebar h1 span { opacity: .4; }
.controls { display: flex; gap: 1px; }
.controls button { width: 18px; height: 18px; border: 1px solid #cfdcfb; border-radius: 3px; background: linear-gradient(135deg, #6d95f5, #2459de 50%, #1a4bd0); }
.controls .close { background: linear-gradient(135deg, #f0a184, #e1532c 50%, #c93c13); }
.controls svg { width: 16px; height: 16px; }

.client {
  flex: 1; min-height: 0; display: grid; grid-template: minmax(0, 1fr) 14px / minmax(0, 1fr) 14px;
  border: solid #0a41dd; border-width: 0 3px 3px 3px; padding: 0 1px 1px 2px; background: #c9c6bb;
}
.drawing { width: 100%; height: 100%; background: #000; }
.part { fill: none; stroke: #f4f4f4; shape-rendering: crispEdges; }
.ext, .lead { fill: none; stroke: #e00000; shape-rendering: crispEdges; }
.dim { fill: none; stroke: #f00000; }
.dim path { marker-end: url(#tip); }
.value { fill: #ff0000; font: 300 13px Roboto, sans-serif; }
.caption { fill: #fff; font: 300 12px Roboto, sans-serif; }
.caption .axis { font-size: 17px; font-weight: 100; }

.vscroll { display: flex; flex-direction: column; align-items: center; background: linear-gradient(90deg, #f3f1ec, #fefefb); }
.vscroll .gutter { flex: 1; }
.vscroll button { width: 12px; height: 13px; border: 1px solid #b4c8f6; border-radius: 2px; background: #c6d6fc; }

.bottom { grid-column: 1 / -1; display: flex; height: 14px; background: #ece9d8; border-top: 1px solid #aca899; }
.pager { display: flex; }
.pager button { width: 15px; border: 1px solid #fff; border-right-color: #aca899; }
.pager svg { width: 12px; height: 12px; }
.tabs { display: flex; flex: 1; margin-left: 1px; }
.tabs button { padding: 0 5px 0 8px; border-bottom: 1px solid #555; }
.tabs .active { padding: 0 7px 0 6px; color: #fff; background: #000; font-weight: bold; clip-path: polygon(0 0, 100% 0, calc(100% - 4px) 100%, 4px 100%); }
.slash { width: 5px; height: 13px; stroke: #000; }
.hscroll { display: flex; width: 315px; }
.split { width: 4px; border: 1px solid #fff; border-right-color: #716f64; }
.hscroll button { width: 13px; border: 1px solid #fff; border-right-color: #716f64; border-bottom-color: #716f64; background: #ece9d8; }
.hscroll svg { width: 12px; height: 12px; }
.hscroll .gutter { flex: 1; background: repeating-conic-gradient(#fff 0 25%, #ece9d8 0 50%) 0 0 / 2px 2px; }
.corner { width: 14px; }
```
